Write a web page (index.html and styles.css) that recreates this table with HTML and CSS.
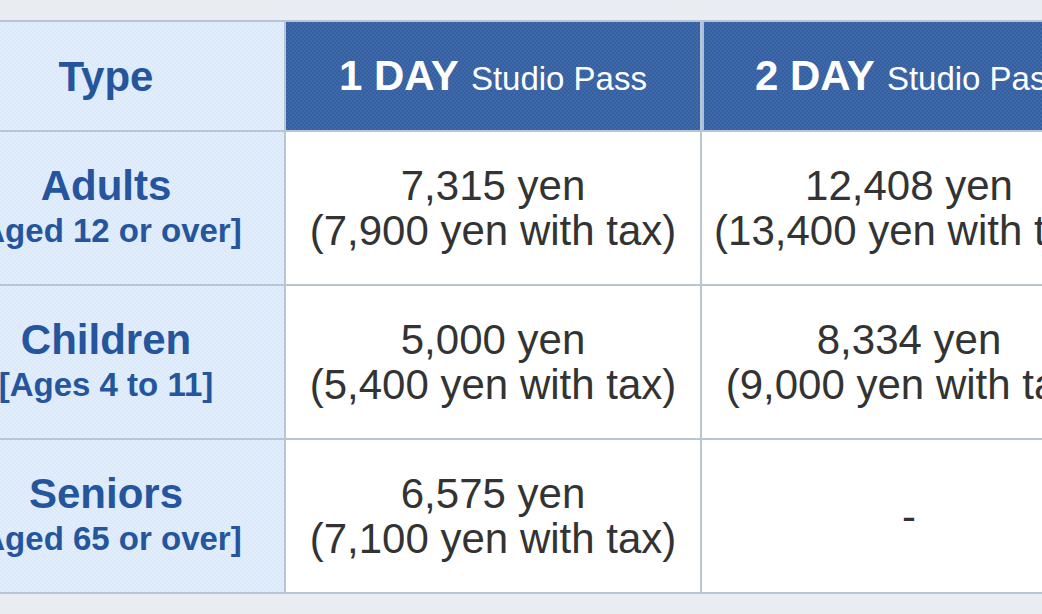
FILE: index.html
```html
<!DOCTYPE html>
<html lang="en">
<head>
<meta charset="utf-8">
<title>Studio Pass Prices</title>
<link rel="stylesheet" href="styles.css">
</head>
<body>
<div class="page">
  <div class="price-table">
    <div class="cell type-head">Type</div>
    <div class="cell pass-head"><div class="pass-title"><b>1 DAY</b><span>Studio Pass</span></div></div>
    <div class="cell pass-head"><div class="pass-title"><b>2 DAY</b><span>Studio Pass</span></div></div>

    <div class="cell type"><div class="t-main">Adults</div><div class="t-sub">[Aged 12 or over]</div></div>
    <div class="cell price"><div>7,315 yen</div><div>(7,900 yen with tax)</div></div>
    <div class="cell price"><div>12,408 yen</div><div>(13,400 yen with tax)</div></div>

    <div class="cell type"><div class="t-main">Children</div><div class="t-sub">[Ages 4 to 11]</div></div>
    <div class="cell price"><div>5,000 yen</div><div>(5,400 yen with tax)</div></div>
    <div class="cell price"><div>8,334 yen</div><div>(9,000 yen with tax)</div></div>

    <div class="cell type"><div class="t-main">Seniors</div><div class="t-sub">[Aged 65 or over]</div></div>
    <div class="cell price"><div>6,575 yen</div><div>(7,100 yen with tax)</div></div>
    <div class="cell price"><div>-</div></div>
  </div>
</div>
</body>
</html>
```

FILE: styles.css
```css
html, body {
  margin: 0;
  padding: 0;
  background: #e9edf1;
  overflow: hidden;
}

.page {
  padding-top: 20px;
  width: 1042px;
  height: 614px;
  overflow: hidden;
  font-family: "Liberation Sans", Arial, Helvetica, sans-serif;
}

.price-table {
  display: grid;
  grid-template-columns: 356px 414px 414px;
  grid-template-rows: 108px 152px 152px 152px;
  gap: 2px;
  padding: 2px;
  width: max-content;
  margin-left: -74px;
  background: #b8c5d5;
}

.cell {
  display: flex;
  flex-direction: column;
  align-items: center;
  justify-content: center;
  text-align: center;
  white-space: nowrap;
}

.type-head,
.type {
  background-color: #deebfb;
  background-image: repeating-conic-gradient(#dce9fa 0 25%, #e2edfc 0 50%);
  background-size: 4px 4px;
  color: #24559d;
  font-weight: bold;
}

.type-head {
  font-size: 42px;
  padding-top: 2px;
}

.t-main {
  font-size: 42px;
  line-height: 45px;
}

.t-sub {
  font-size: 33px;
  line-height: 45px;
}

.pass-head {
  background-color: #3d66a8;
  background-image: repeating-conic-gradient(#4069ab 0 25%, #35609f 0 50%);
  background-size: 4px 4px;
  color: #ffffff;
  box-shadow: inset 2px 0 0 #a9c1e1;
}

.pass-head:nth-child(2) {
  box-shadow: none;
}

.pass-title {
  display: flex;
  align-items: baseline;
  gap: 12px;
  padding-top: 0;
}

.pass-title b {
  font-size: 42px;
  font-weight: bold;
}

.pass-title span {
  font-size: 33px;
}

.price {
  background: #ffffff;
  color: #333333;
  font-size: 42px;
  line-height: 45px;
  padding-top: 0;
}
```
